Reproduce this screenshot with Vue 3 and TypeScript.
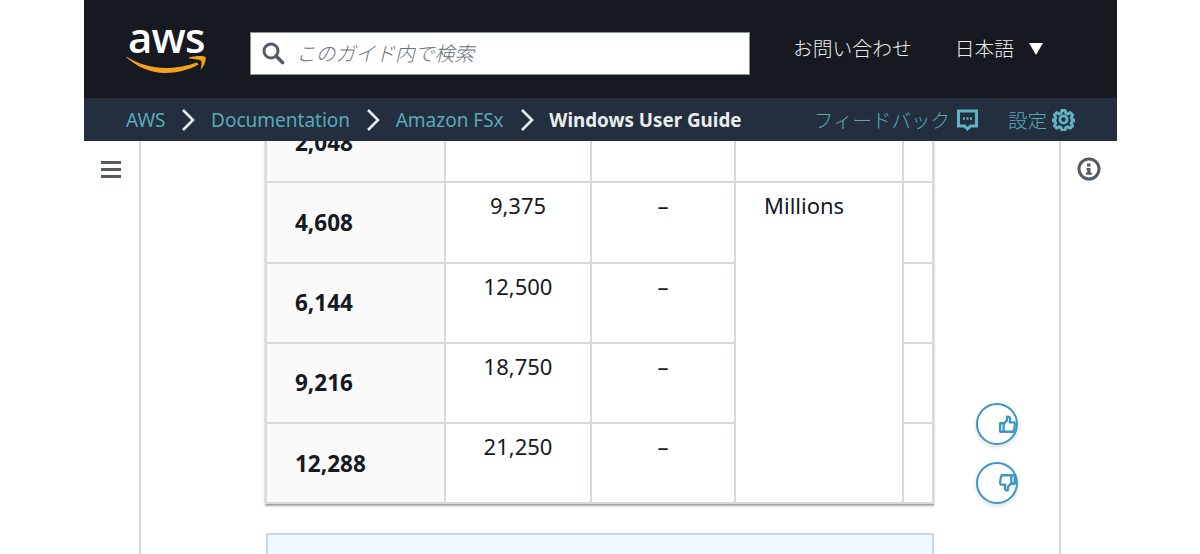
<script setup lang="ts">
interface Row {
  size: string
  iops: string
  other: string
}

const rows: Row[] = [
  { size: '2,048', iops: '', other: '' },
  { size: '4,608', iops: '9,375', other: '–' },
  { size: '6,144', iops: '12,500', other: '–' },
  { size: '9,216', iops: '18,750', other: '–' },
  { size: '12,288', iops: '21,250', other: '–' },
]
</script>

<template>
  <div class="page">
    <header class="top-bar">
      <div class="logo">
        <span class="logo-text">aws</span>
        <svg class="smile" width="81" height="19" viewBox="0 0 81 19">
          <path d="M0.500 1.500C12 9 26 13 40 13C51 13 62 10.500 71 7.500L72.500 9.500C63 15 51 18 39 18C24 18 10 11 0.500 2.500Z" fill="#f4a11d" />
          <path d="M63 2.500C69 0.800 77 0.500 79.500 2C80.500 5 78 11.500 74.500 15C75.500 11 76 7.500 75 5.500C72 4.500 67 3.800 63 3.500Z" fill="#f4a11d" />
        </svg>
      </div>
      <div class="search">
        <svg width="24" height="24" viewBox="0 0 24 24" class="search-icon">
          <circle cx="10" cy="10" r="7" fill="none" stroke="#545b64" stroke-width="3" />
          <path d="M15 15l6.500 6.500" stroke="#545b64" stroke-width="3.600" stroke-linecap="round" />
        </svg>
        <span class="search-hint">このガイド内で検索</span>
      </div>
      <span class="top-link contact">お問い合わせ</span>
      <span class="top-link">日本語</span>
      <span class="caret"></span>
    </header>

    <nav class="sub-bar">
      <a class="crumb">AWS</a>
      <svg class="chev" width="14" height="24" viewBox="0 0 14 24"><path d="M2 2l10 10L2 22" /></svg>
      <a class="crumb">Documentation</a>
      <svg class="chev" width="14" height="24" viewBox="0 0 14 24"><path d="M2 2l10 10L2 22" /></svg>
      <a class="crumb">Amazon FSx</a>
      <svg class="chev" width="14" height="24" viewBox="0 0 14 24"><path d="M2 2l10 10L2 22" /></svg>
      <span class="crumb current">Windows User Guide</span>
      <span class="sub-actions">
        <a class="crumb jp">フィードバック</a>
        <svg class="feedback" width="21" height="22" viewBox="0 0 21 22">
          <path d="M1.500 2h18v15h-6l-3 3-3-3h-6z" fill="none" stroke="#5fb3c4" stroke-width="3" />
          <path d="M6 9.500h2M9.500 9.500h2M13 9.500h2" stroke="#5fb3c4" stroke-width="2.400" />
        </svg>
        <a class="crumb jp settings">設定</a>
        <svg class="gear" width="23" height="23" viewBox="0 0 24 24">
          <circle cx="12" cy="12" r="3.800" fill="none" stroke="#5fb3c4" stroke-width="3" />
          <path d="M10 1.500h4l.7 3.200 2.300 1 2.800-1.700 2.800 2.800-1.700 2.800 1 2.300 3 .7v.8l-3 .7-1 2.300 1.700 2.800-2.800 2.800-2.800-1.700-2.300 1-.7 3h-4l-.7-3-2.300-1-2.800 1.700-2.800-2.800 1.700-2.800-1-2.300-3-.7v-.8l3-.7 1-2.300-1.700-2.800 2.800-2.800 2.800 1.700 2.300-1z" transform="translate(1.200 1.200) scale(.9)" fill="none" stroke="#5fb3c4" stroke-width="3.400" stroke-linejoin="round" />
        </svg>
      </span>
    </nav>

    <div class="body">
      <aside class="rail-left">
        <span class="burger"><i></i><i></i><i></i></span>
      </aside>

      <main class="content">
        <div class="table">
          <template v-for="(row, i) in rows" :key="row.size">
            <div class="cell head">{{ row.size }}</div>
            <div class="cell center">{{ row.iops }}</div>
            <div class="cell center">{{ row.other }}</div>
            <div v-if="i === 0" class="cell"></div>
            <div v-if="i === 1" class="cell millions">Millions</div>
            <div class="cell last"></div>
          </template>
        </div>
        <div class="note"></div>
      </main>

      <aside class="rail-right">
        <svg width="24" height="24" viewBox="0 0 24 24">
          <circle cx="12" cy="12" r="10" fill="none" stroke="#545b64" stroke-width="3" />
          <path d="M10 6.500h3.500v3H10zM9.500 11h4v4.500h1.300v2.300H9v-2.300h1.200v-2.300h-.7z" fill="#545b64" />
        </svg>
      </aside>

      <button class="vote up">
        <svg width="22" height="24" viewBox="0 0 22 24">
          <path d="M1.500 11h4.500v11H1.500zM6 12l4.500-5V2.500c2.500-.5 4 1 4 3.500l-.7 4H20c1 3.500 0 8.500-1.500 12H8L6 21" fill="none" stroke="#3a97c4" stroke-width="3" stroke-linejoin="round" />
        </svg>
      </button>
      <button class="vote down">
        <svg width="22" height="24" viewBox="0 0 22 24">
          <path d="M1.500 11h4.500v11H1.500zM6 12l4.500-5V2.500c2.500-.5 4 1 4 3.500l-.7 4H20c1 3.500 0 8.500-1.500 12H8L6 21" fill="none" stroke="#3a97c4" stroke-width="3" stroke-linejoin="round" transform="rotate(180 11 12)" />
        </svg>
      </button>
    </div>
  </div>
</template>

<style>
html,
body {
  margin: 0;
  background: #fff;
  overflow: hidden;
}
</style>

<style scoped>
.page {
  width: 1033px;
  height: 554px;
  margin-left: 84px;
  display: flex;
  flex-direction: column;
  overflow: hidden;
  font-family: 'Noto Sans', 'Noto Sans CJK JP', sans-serif;
  color: #16191f;
}

.top-bar {
  height: 98px;
  flex: none;
  background: #16191f;
  display: flex;
  align-items: center;
  color: #eaeded;
}

.logo {
  width: 80px;
  margin-left: 42px;
  display: flex;
  flex-direction: column;
  margin-top: -2px;
}

.logo-text {
  font-family: 'Open Sans', sans-serif;
  font-size: 42px;
  font-weight: 600;
  line-height: 30px;
  letter-spacing: -0.8px;
  color: #fff;
  margin-left: 2px;
}

.smile {
  margin-top: 3px;
}

.search {
  width: 498px;
  height: 41px;
  margin-left: 44px;
  margin-top: 8px;
  background: #fff;
  border: 1px solid #879596;
  display: flex;
  align-items: center;
}

.search-icon {
  margin-left: 10px;
}

.search-hint {
  margin: -2px 0 0 11px;
  font-size: 19.800px;
  font-style: italic;
  font-weight: 300;
  color: #687078;
}

.top-link {
  font-size: 19.800px;
  font-weight: 300;
  margin-top: -3px;
}

.contact {
  margin-left: 43px;
  margin-right: 43px;
}

.caret {
  margin-left: 15px;
  border-left: 7.500px solid transparent;
  border-right: 7.500px solid transparent;
  border-top: 12px solid #fff;
}

.sub-bar {
  height: 43px;
  flex: none;
  background: #232f3e;
  display: flex;
  align-items: center;
  padding-left: 42px;
  position: relative;
  z-index: 1;
}

.crumb {
  font-size: 19px;
  color: #5aa9ba;
}

.current {
  font-weight: 700;
  color: #eaeded;
  font-size: 18.800px;
}

.chev {
  margin: 0 15.600px 0 16px;
}

.chev path {
  fill: none;
  stroke: #eaeded;
  stroke-width: 2.600;
}

.sub-actions {
  margin-left: auto;
  display: flex;
  align-items: center;
  padding-right: 42px;
}

.jp {
  font-size: 19.500px;
  font-weight: 300;
}

.feedback {
  margin-left: 7px;
}

.settings {
  margin-left: 30px;
}

.gear {
  margin-left: 5px;
}

.body {
  flex: 1;
  display: flex;
  position: relative;
  min-height: 0;
  overflow: hidden;
}

.rail-left {
  width: 57px;
  flex: none;
  border-right: 2px solid #d5dbdb;
  box-sizing: border-box;
  display: flex;
  justify-content: center;
  padding: 20px 2px 0 0;
}

.burger {
  display: flex;
  flex-direction: column;
  gap: 4px;
  width: 20px;
}

.burger i {
  display: block;
  height: 3px;
  background: #545b64;
}

.rail-right {
  width: 58px;
  flex: none;
  border-left: 2px solid #d5dbdb;
  box-sizing: border-box;
  display: flex;
  justify-content: center;
  padding-top: 16px;
}

.content {
  flex: 1;
  padding-left: 124px;
  min-width: 0;
}

.table {
  margin-top: -38px;
  display: grid;
  grid-template-columns: 179px 146px 144px 168px 30px;
  grid-auto-rows: 80.250px;
  border-left: 2px solid #d5dbdb;
  border-bottom: 1px solid #9aa5a6;
  box-shadow: 0 1px 2px rgba(0, 0, 0, 0.35);
  width: 669px;
  box-sizing: border-box;
  font-size: 22px;
}

.cell {
  border-right: 2px solid #d5dbdb;
  border-bottom: 2px solid #d5dbdb;
  box-sizing: border-box;
}

.head {
  background: #fafafa;
  font-weight: 700;
  font-size: 22.500px;
  display: flex;
  align-items: center;
  padding-left: 28px;
}

.center {
  text-align: center;
  padding-top: 7px;
}

.millions {
  grid-column: 4;
  grid-row: 2 / span 4;
  padding: 7px 0 0 28px;
}

.last {
  grid-column: 5;
}

.note {
  width: 668px;
  height: 40px;
  margin: 28px 0 0 1px;
  background: #f1f9fe;
  border: 2px solid #c5d9e6;
  box-sizing: border-box;
}

.vote {
  position: absolute;
  left: 892px;
  width: 42px;
  height: 42px;
  border-radius: 50%;
  background: #fff;
  border: 2px solid #3a97c4;
  box-shadow: 0 2px 4px rgba(0, 0, 0, 0.15);
  padding: 0 0 0 21px;
  display: flex;
  align-items: center;
  overflow: visible;
}

.up {
  top: 262px;
}

.down {
  top: 321px;
}
</style>
